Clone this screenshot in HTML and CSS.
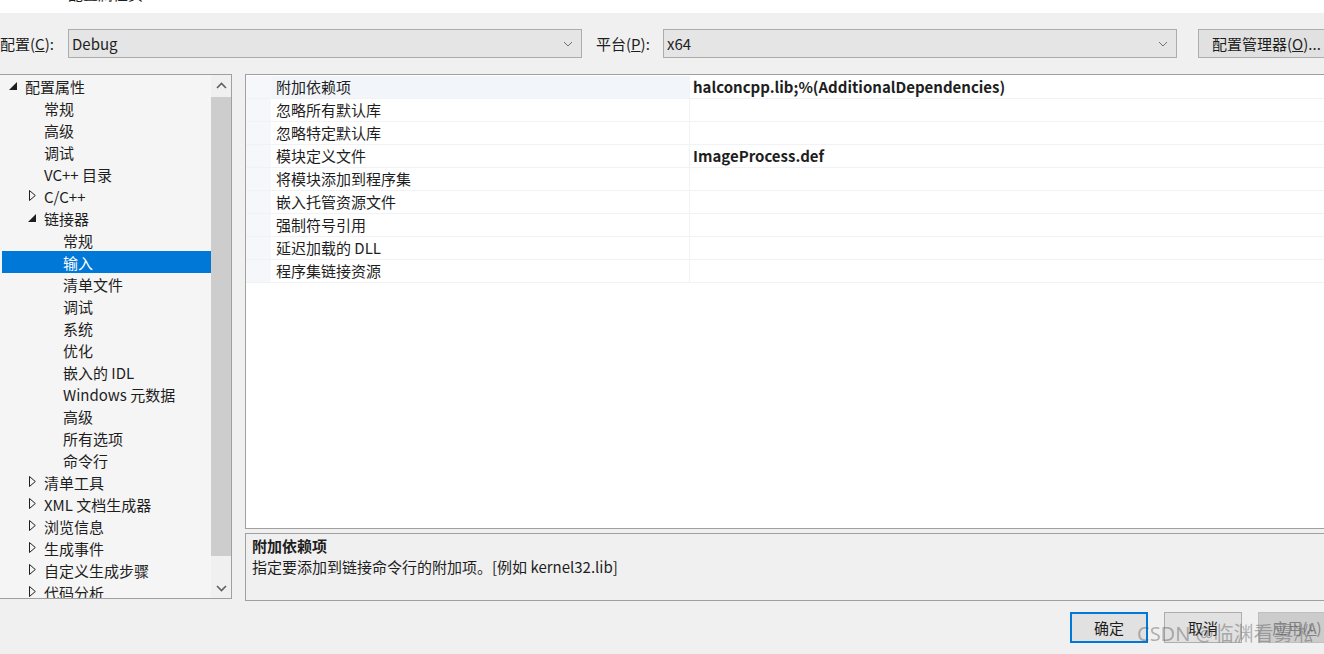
FILE: index.html
```html
<!DOCTYPE html>
<html lang="zh-CN">
<head>
<meta charset="utf-8">
<title>属性页</title>
<link rel="stylesheet" href="styles.css">
</head>
<body>
<div class="page">
  <div class="titlebar"><span class="title-text">配置属性页</span></div>

  <div class="toolbar">
    <span class="lbl">配置(<u>C</u>):</span>
    <div class="combo combo-config"><span>Debug</span>
      <svg class="chev" width="10" height="6" viewBox="0 0 10 6"><path d="M1 1 L5 5 L9 1" fill="none" stroke="#707070" stroke-width="1"/></svg>
    </div>
    <span class="lbl lbl-platform">平台(<u>P</u>):</span>
    <div class="combo combo-platform"><span>x64</span>
      <svg class="chev" width="10" height="6" viewBox="0 0 10 6"><path d="M1 1 L5 5 L9 1" fill="none" stroke="#707070" stroke-width="1"/></svg>
    </div>
    <div class="btn btn-manager">配置管理器(<u>O</u>)...</div>
  </div>

  <div class="main">
    <div class="tree">
      <div class="tree-list">
        <div class="node l0"><svg class="exp open" width="8" height="8" viewBox="0 0 8 8"><polygon points="8,0 8,8 0,8" fill="#1e1e1e"/></svg>配置属性</div>
        <div class="node l1">常规</div>
        <div class="node l1">高级</div>
        <div class="node l1">调试</div>
        <div class="node l1">VC++ 目录</div>
        <div class="node l1"><svg class="exp closed" width="7" height="11" viewBox="0 0 7 11"><polygon points="0.5,0.5 6.3,5.5 0.5,10.5" fill="none" stroke="#1e1e1e" stroke-width="1"/></svg>C/C++</div>
        <div class="node l1"><svg class="exp open" width="8" height="8" viewBox="0 0 8 8"><polygon points="8,0 8,8 0,8" fill="#1e1e1e"/></svg>链接器</div>
        <div class="node l2">常规</div>
        <div class="node l2 selected">输入</div>
        <div class="node l2">清单文件</div>
        <div class="node l2">调试</div>
        <div class="node l2">系统</div>
        <div class="node l2">优化</div>
        <div class="node l2">嵌入的 IDL</div>
        <div class="node l2">Windows 元数据</div>
        <div class="node l2">高级</div>
        <div class="node l2">所有选项</div>
        <div class="node l2">命令行</div>
        <div class="node l1"><svg class="exp closed" width="7" height="11" viewBox="0 0 7 11"><polygon points="0.5,0.5 6.3,5.5 0.5,10.5" fill="none" stroke="#1e1e1e" stroke-width="1"/></svg>清单工具</div>
        <div class="node l1"><svg class="exp closed" width="7" height="11" viewBox="0 0 7 11"><polygon points="0.5,0.5 6.3,5.5 0.5,10.5" fill="none" stroke="#1e1e1e" stroke-width="1"/></svg>XML 文档生成器</div>
        <div class="node l1"><svg class="exp closed" width="7" height="11" viewBox="0 0 7 11"><polygon points="0.5,0.5 6.3,5.5 0.5,10.5" fill="none" stroke="#1e1e1e" stroke-width="1"/></svg>浏览信息</div>
        <div class="node l1"><svg class="exp closed" width="7" height="11" viewBox="0 0 7 11"><polygon points="0.5,0.5 6.3,5.5 0.5,10.5" fill="none" stroke="#1e1e1e" stroke-width="1"/></svg>生成事件</div>
        <div class="node l1"><svg class="exp closed" width="7" height="11" viewBox="0 0 7 11"><polygon points="0.5,0.5 6.3,5.5 0.5,10.5" fill="none" stroke="#1e1e1e" stroke-width="1"/></svg>自定义生成步骤</div>
        <div class="node l1"><svg class="exp closed" width="7" height="11" viewBox="0 0 7 11"><polygon points="0.5,0.5 6.3,5.5 0.5,10.5" fill="none" stroke="#1e1e1e" stroke-width="1"/></svg>代码分析</div>
      </div>
      <div class="vscroll">
        <div class="sarrow"><svg width="11" height="7" viewBox="0 0 11 7"><path d="M1 6 L5.5 1.5 L10 6" fill="none" stroke="#606060" stroke-width="1.6"/></svg></div>
        <div class="strack"><div class="sthumb"></div></div>
        <div class="sarrow"><svg width="11" height="7" viewBox="0 0 11 7"><path d="M1 1 L5.5 5.5 L10 1" fill="none" stroke="#606060" stroke-width="1.6"/></svg></div>
      </div>
    </div>

    <div class="right">
      <div class="grid">
        <div class="prow active"><div class="pgut"></div><div class="pname">附加依赖项</div><div class="pval">halconcpp.lib;%(AdditionalDependencies)</div></div>
        <div class="prow"><div class="pgut"></div><div class="pname">忽略所有默认库</div><div class="pval"></div></div>
        <div class="prow"><div class="pgut"></div><div class="pname">忽略特定默认库</div><div class="pval"></div></div>
        <div class="prow"><div class="pgut"></div><div class="pname">模块定义文件</div><div class="pval">ImageProcess.def</div></div>
        <div class="prow"><div class="pgut"></div><div class="pname">将模块添加到程序集</div><div class="pval"></div></div>
        <div class="prow"><div class="pgut"></div><div class="pname">嵌入托管资源文件</div><div class="pval"></div></div>
        <div class="prow"><div class="pgut"></div><div class="pname">强制符号引用</div><div class="pval"></div></div>
        <div class="prow"><div class="pgut"></div><div class="pname">延迟加载的 DLL</div><div class="pval"></div></div>
        <div class="prow"><div class="pgut"></div><div class="pname">程序集链接资源</div><div class="pval"></div></div>
      </div>
      <div class="desc">
        <div class="desc-title">附加依赖项</div>
        <div class="desc-text">指定要添加到链接命令行的附加项。[例如 kernel32.lib]</div>
      </div>
    </div>
  </div>

  <div class="footer">
    <div class="btn fbtn default">确定</div>
    <div class="btn fbtn">取消</div>
    <div class="btn fbtn disabled">应用(<u>A</u>)</div>
  </div>

  <div class="watermark">CSDN @临渊看雾凇</div>
</div>
</body>
</html>
```

FILE: styles.css
```css
html, body {
  margin: 0;
  padding: 0;
  width: 1324px;
  height: 654px;
  overflow: hidden;
  background: #f0f0f0;
}

.page {
  position: relative;
  width: 1340px;
  height: 654px;
  font-family: "Noto Sans CJK SC", "Noto Sans", sans-serif;
  font-size: 15px;
  color: #1e1e1e;
  display: flex;
  flex-direction: column;
}

.titlebar {
  height: 13px;
  background: #ffffff;
  overflow: hidden;
  padding-left: 68px;
}
.title-text {
  display: block;
  margin-top: -15px;
  line-height: 18px;
  font-size: 15px;
  color: #1e1e1e;
}

.toolbar {
  display: flex;
  align-items: center;
  height: 29px;
  margin-top: 16px;
}
.lbl {
  line-height: 28px;
  width: 68px;
  flex: none;
}
.lbl-platform {
  box-sizing: border-box;
  padding-left: 14px;
  width: 81px;
}
.combo {
  box-sizing: border-box;
  height: 29px;
  border: 1px solid #acacac;
  background: #e5e5e5;
  display: flex;
  align-items: center;
  justify-content: space-between;
  padding: 0 8px 0 3px;
  line-height: 26px;
}
.combo-config { width: 514px; }
.combo-platform { width: 514px; }
.chev { flex: none; }

.btn {
  box-sizing: border-box;
  border: 1px solid #adadad;
  background: #e1e1e1;
  display: flex;
  align-items: center;
  justify-content: center;
}
.btn-manager {
  margin-left: 21px;
  width: 134px;
  height: 29px;
  justify-content: flex-start;
  padding-left: 13px;
  line-height: 26px;
  white-space: nowrap;
}

.main {
  display: flex;
  margin-top: 16px;
  gap: 13px;
}

.tree {
  box-sizing: border-box;
  width: 233px;
  height: 525px;
  margin-left: -1px;
  border: 1px solid #a0a0a0;
  background: #f5f5f5;
  display: flex;
  overflow: hidden;
}
.tree-list {
  flex: 1;
  padding-top: 0;
  overflow: hidden;
}
.node {
  position: relative;
  height: 22px;
  line-height: 21px;
  white-space: nowrap;
  display: flex;
  align-items: center;
}
.node.l0 { padding-left: 25px; }
.node.l1 { padding-left: 44px; }
.node.l2 { padding-left: 63px; }
.node .exp {
  position: absolute;
}
.node .exp.open { top: 7px; }
.node .exp.closed { top: 5px; }
.node.l0 .exp { left: 9px; }
.node.l1 .exp { left: 29px; }
.node.l1 .exp.open { left: 28px; }
.node.selected {
  background: #0078d7;
  color: #ffffff;
  margin-left: 2px;
  padding-left: 61px;
}

.vscroll {
  width: 20px;
  flex: none;
  background: #f0f0f0;
  display: flex;
  flex-direction: column;
}
.sarrow {
  height: 20px;
  display: flex;
  align-items: center;
  justify-content: center;
}
.strack {
  flex: 1;
  position: relative;
}
.sthumb {
  position: absolute;
  left: 0;
  right: 0;
  top: 2px;
  height: 459px;
  background: #cdcdcd;
}

.right {
  display: flex;
  flex-direction: column;
  gap: 4px;
  flex: 1;
}
.grid {
  box-sizing: border-box;
  height: 455px;
  border: 1px solid #a0a0a0;
  background: #ffffff;
  padding-top: 1px;
}
.prow {
  display: flex;
  height: 23px;
  box-sizing: border-box;
  border-bottom: 1px solid #f0f2f5;
}
.pgut {
  width: 25px;
  flex: none;
  background: #f5f7fa;
}
.pname {
  width: 413px;
  flex: none;
  padding-left: 5px;
  line-height: 22px;
  border-right: 1px solid #f0f2f5;
  background: #ffffff;
}
.prow.active .pname { background: #f2f5fa; }
.pval {
  flex: 1;
  padding-left: 3px;
  line-height: 22px;
  font-weight: bold;
}

.desc {
  box-sizing: border-box;
  height: 68px;
  border: 1px solid #a0a0a0;
  background: #f0f0f0;
  padding: 2px 6px;
}
.desc-title {
  font-weight: bold;
  line-height: 20px;
}
.desc-text {
  line-height: 22px;
}

.footer {
  display: flex;
  gap: 16px;
  margin-top: 11px;
  padding-left: 1070px;
}
.fbtn {
  width: 78px;
  height: 31px;
}
.fbtn.default {
  border: 2px solid #0078d7;
}
.fbtn.disabled {
  background: #cccccc;
  border-color: #bfbfbf;
  color: #838383;
}

.watermark {
  position: absolute;
  left: 1137px;
  top: 621px;
  font-family: "Noto Sans", "Noto Sans CJK SC", sans-serif;
  font-size: 20px;
  line-height: 26px;
  color: rgba(80, 80, 80, 0.42);
  white-space: nowrap;
  pointer-events: none;
}
```
